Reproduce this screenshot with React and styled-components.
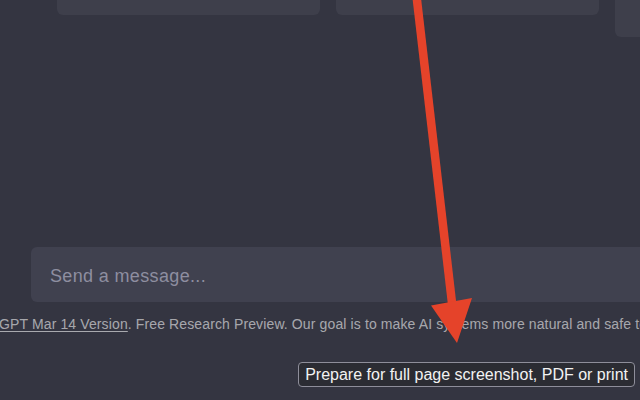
import React from "react";
import styled, { createGlobalStyle } from "styled-components";

const Global = createGlobalStyle`
  html, body { margin: 0; padding: 0; background: #343541; }
  body { font-family: "Liberation Sans", Arial, sans-serif; }
`;

const Page = styled.div`
  position: relative;
  width: 640px;
  height: 400px;
  overflow: hidden;
  background: #343541;
  display: flex;
  flex-direction: column;
`;

const CardsRow = styled.div`
  display: flex;
  align-items: flex-start;
  gap: 16px;
  padding-left: 57px;
`;

const Card = styled.div`
  flex: 0 0 263px;
  height: ${(p) => p.$h}px;
  background: #3e3f4b;
  border-radius: 0 0 6px 6px;
`;

const Bottom = styled.div`
  margin-top: auto;
  padding-bottom: 66px;
  display: flex;
  flex-direction: column;
`;

const InputBox = styled.div`
  margin-left: 31px;
  margin-right: -120px;
  height: 55px;
  box-sizing: border-box;
  background: #40414f;
  border-radius: 6px;
  display: flex;
  align-items: center;
  padding: 3px 0 0 19px;
  font-size: 18px;
  letter-spacing: 0.35px;
  color: #8e8ea0;
`;

const Footer = styled.div`
  padding-top: 12px;
  margin-left: -31px;
  font-size: 14px;
  letter-spacing: 0.12px;
  line-height: 20px;
  white-space: nowrap;
  color: rgba(255, 255, 255, 0.58);
`;

const FooterLink = styled.span`
  text-decoration: underline;
  text-underline-offset: 2px;
`;

const Tooltip = styled.div`
  position: absolute;
  right: 5px;
  bottom: 13px;
  height: 23px;
  padding: 0 6px;
  display: flex;
  align-items: center;
  border: 1px solid #8e8e9a;
  border-radius: 4px;
  background: #2b2c33;
  color: #f2f2f2;
  font-size: 16px;
  white-space: nowrap;
`;

const ArrowLayer = styled.svg`
  position: absolute;
  left: 0;
  top: 0;
  width: 640px;
  height: 400px;
  pointer-events: none;
`;

export default function App() {
  return (
    <>
      <Global />
      <Page>
        <CardsRow>
          <Card $h={15} />
          <Card $h={15} />
          <Card $h={37} />
        </CardsRow>
        <Bottom>
          <InputBox>Send a message...</InputBox>
          <Footer>
            <FooterLink>ChatGPT Mar 14 Version</FooterLink>. Free Research Preview. Our goal is to make AI systems more natural and safe to interact with. Your feedback will help us improve.
          </Footer>
        </Bottom>
        <Tooltip>Prepare for full page screenshot, PDF or print</Tooltip>
        <ArrowLayer viewBox="0 0 640 400">
          <line x1="416.5" y1="-4" x2="452" y2="303" stroke="#e5432a" strokeWidth="8.5" />
          <polygon points="431,305.5 472,298 457,343" fill="#e5432a" />
        </ArrowLayer>
      </Page>
    </>
  );
}
